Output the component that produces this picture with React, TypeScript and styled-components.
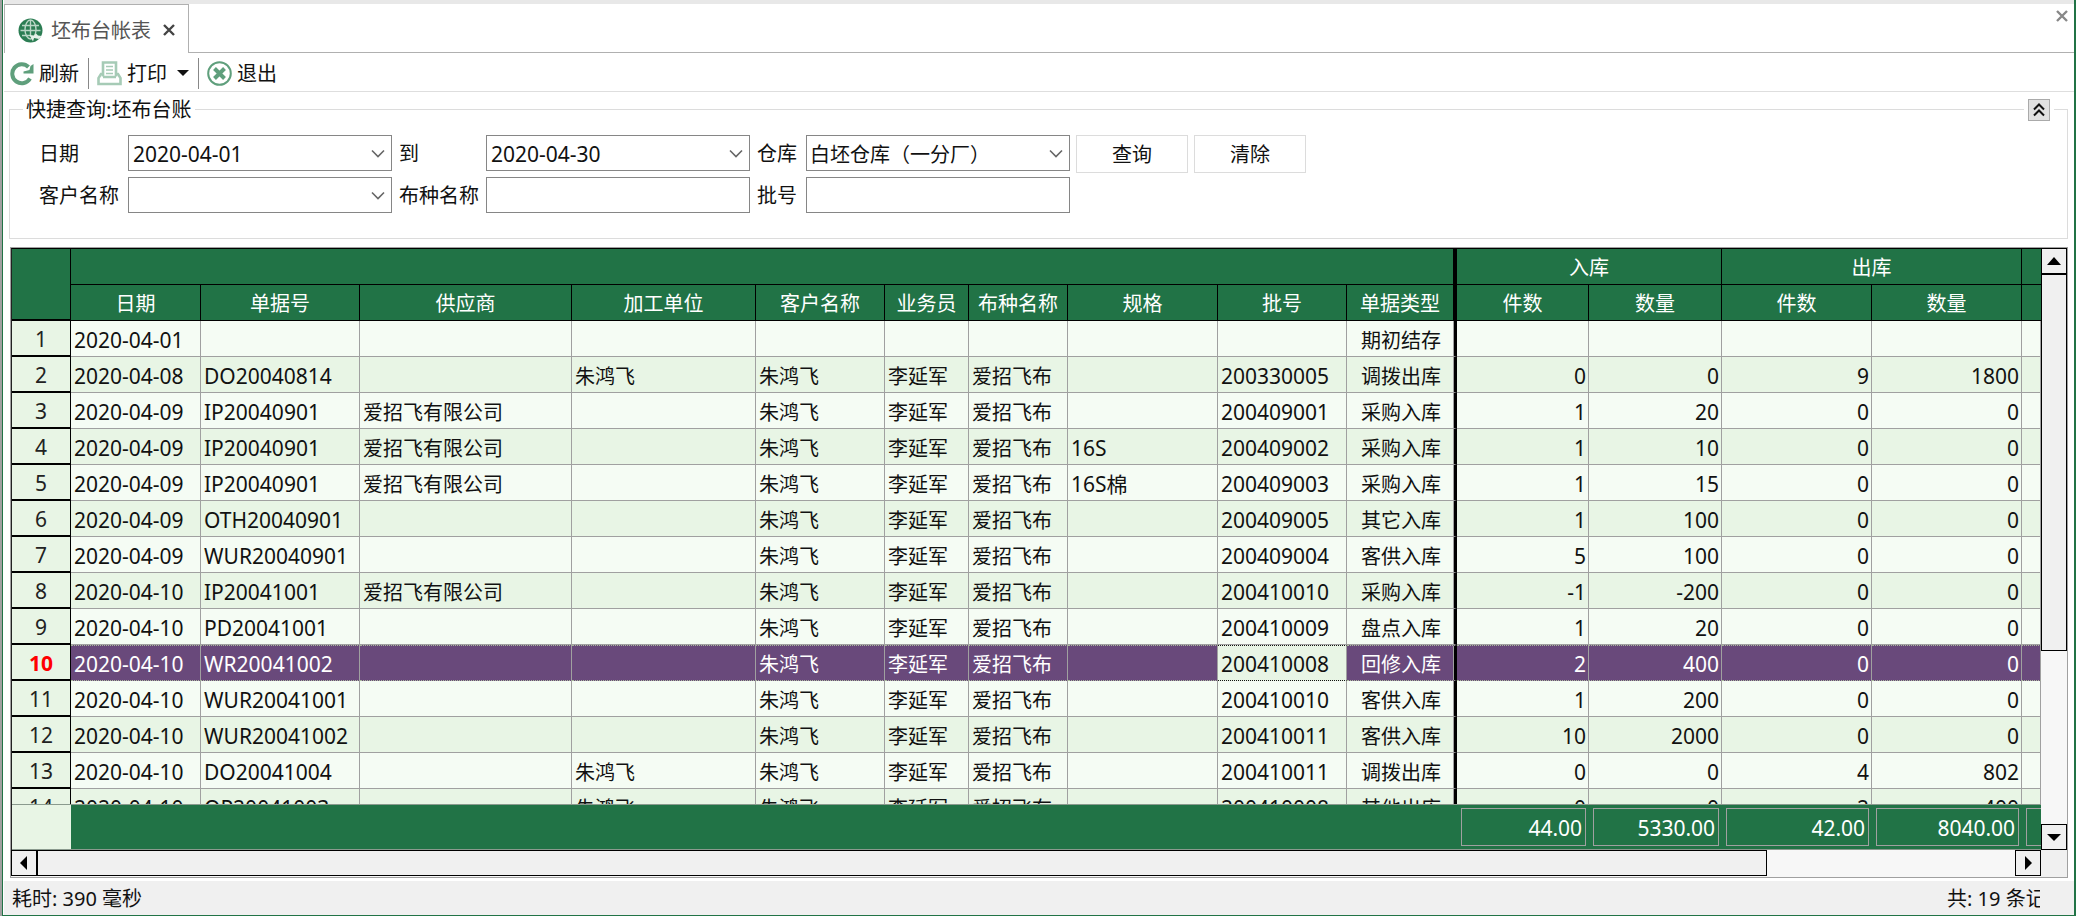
import React from "react";
import styled, { createGlobalStyle, css } from "styled-components";

const green = "#217346";
const latin = `"Noto Sans", "Noto Sans CJK SC", sans-serif`;
const cjk = `"Noto Sans CJK SC", "Noto Sans", sans-serif`;

const GlobalStyle = createGlobalStyle`
  *, *::before, *::after { box-sizing: border-box; }
  body { margin: 0; background: #fff; color: #111; font: 20px/24px ${cjk}; }
  button, input, select { font: inherit; color: inherit; }
`;

const Frame = styled.div`
  height: 100vh;
  padding-left: 2px;
  background: #a0a0a0;
`;

const Window = styled.div`
  display: flex;
  flex-direction: column;
  height: 100vh;
  overflow: hidden;
  padding-left: 1px;
  border: solid ${green};
  border-width: 0 2px 1px 1px;
  background: #fff;
`;

const TabStrip = styled.header`
  display: flex;
  flex: none;
  height: 53px;
  border-top: 4px solid #e8e8e8;
`;

const Tab = styled.div`
  display: flex;
  align-items: center;
  gap: 8px;
  width: 185px;
  padding: 2px 8px 0 13px;
  border: 1px solid #b0b0b0;
  border-bottom: 0;
  color: #555;
  white-space: nowrap;
  svg { flex: none; }
`;

const TabRest = styled.div`
  display: flex;
  flex: 1;
  justify-content: flex-end;
  align-items: flex-start;
  padding: 5px 5px 0 0;
  border-bottom: 1px solid #b0b0b0;
`;

const IconButton = styled.button<{ $color: string }>`
  display: grid;
  place-items: center;
  width: 14px;
  height: 14px;
  margin-left: 3px;
  padding: 0;
  border: 0;
  background: none;
  color: ${(p) => p.$color};
`;

const Toolbar = styled.div`
  display: flex;
  flex: none;
  align-items: center;
  height: 39px;
  padding: 2px 0 0 5px;
  border-bottom: 1px solid #dedede;
`;

const ToolButton = styled.button`
  display: flex;
  align-items: center;
  gap: 5px;
  height: 30px;
  padding: 0;
  border: 0;
  background: none;
`;

const Separator = styled.span`
  width: 1px;
  height: 31px;
  margin: 0 8px 0 9px;
  background: #888;
`;

const Caret = styled.span`
  margin-left: 5px;
  border: 6px solid transparent;
  border-top-color: #111;
  border-bottom: 0;
`;

const Query = styled.fieldset`
  position: relative;
  flex: none;
  height: 143px;
  margin: 4px 6px 0 5px;
  padding: 13px 28px 0;
  border: 1px solid #dcdcdc;
`;

const Legend = styled.legend`
  margin-left: -15px;
  padding: 0 3px;
  height: 26px;
  line-height: 26px;
`;

const Collapse = styled.button`
  position: absolute;
  top: -23px;
  right: 17px;
  display: grid;
  place-items: center;
  width: 22px;
  height: 22px;
  padding: 0;
  border: 1px solid #aaa;
  background: #e1e1e1;
  box-shadow: -4px 0 #fff, 4px 0 #fff;
`;

const Fields = styled.div`
  display: grid;
  grid-template-columns: 84px 264px 82px 264px 44px 264px 112px 112px;
  grid-auto-rows: 36px;
  gap: 6px;
  label { padding-left: 1px; white-space: nowrap; line-height: 36px; }
`;

const Box = styled.span`
  display: flex;
  align-items: center;
  border: 1px solid #868686;
  background: #fff;
`;

const Input = styled.input`
  flex: 1;
  min-width: 0;
  height: 34px;
  padding: 2px 4px 0;
  border: 0;
  outline: 0;
  background: none;
  font: 21px ${latin};
`;

const DropButton = styled.button`
  display: grid;
  place-items: center;
  width: 26px;
  height: 34px;
  padding: 0;
  border: 0;
  background: none;
  color: #666;
`;

const SelectBox = styled(Box)`
  display: grid;
  grid-template-columns: 1fr 26px;
  svg { grid-area: 1 / 2; justify-self: center; pointer-events: none; color: #666; }
`;

const Select = styled.select`
  grid-area: 1 / 1 / 2 / 3;
  height: 34px;
  padding: 2px 3px 0;
  border: 0;
  outline: 0;
  appearance: none;
  background: none;
`;

const PushButton = styled.button`
  height: 38px;
  border: 1px solid #dcdcdc;
  background: #fff;
`;

const GridFrame = styled.main`
  display: grid;
  grid-template-columns: 1fr 26px;
  grid-template-rows: 1fr 27px;
  flex: 1;
  min-height: 0;
  margin: 8px 6px 3px;
  border: 1px solid #a0a0a0;
`;

const Viewport = styled.div`
  display: flex;
  flex-direction: column;
  min-width: 0;
  min-height: 0;
  border-top: 1px solid #000;
  border-left: 1px solid #222;
`;

const Clip = styled.div`
  flex: 1;
  min-height: 0;
  overflow: hidden;
`;

const Table = styled.table`
  width: 100%;
  table-layout: fixed;
  border-collapse: separate;
  border-spacing: 0;
`;

const HeadCell = styled.th<{ $frozen?: boolean }>`
  height: 36px;
  padding: 0;
  border: solid #000;
  border-width: 0 ${(p) => (p.$frozen ? 4 : 1)}px 1px 0;
  background: ${green};
  color: #fff;
  font-weight: 400;
  line-height: 24px;
  white-space: nowrap;
  &:last-child { border-right: 0; }
`;

const Corner = styled(HeadCell)`
  border-bottom-width: 2px;
`;

const RowHead = styled.th<{ $active: boolean }>`
  height: 36px;
  padding: 2px 0 0;
  border: solid #000;
  border-width: 0 1px 2px 0;
  background: #e8f5e5;
  font: ${(p) => (p.$active ? 700 : 400)} 21px/24px ${latin};
  color: ${(p) => (p.$active ? "#f00" : "#222")};
`;

const Cell = styled.td<{ $align?: string; $latin?: boolean; $frozen?: boolean; $focus?: boolean }>`
  height: 36px;
  padding: 2px 2px 0 3px;
  border: solid #a0a0a0;
  border-width: 0 1px 1px 0;
  text-align: ${(p) => p.$align || "left"};
  white-space: nowrap;
  ${(p) => p.$latin && css`font: 21px/24px ${latin};`}
  ${(p) => p.$frozen && css`
    border-right: 3px solid #000;
    box-shadow: inset -1px 0 #a0a0a0;
  `}
  ${(p) => p.$focus && css`
    background: #e8f5e5;
    color: #111;
  `}
`;

const Row = styled.tr<{ $active: boolean }>`
  background: #f5fcf4;
  &:nth-child(even) { background: #e8f5e5; }
  ${(p) => p.$active && css`
    &&& { background: #69497b; }
    color: #fff;
    td { border-top: 1px dotted #a9b89c; border-bottom: 1px dotted #a9b89c; }
    ${Cell}:nth-child(10) { border-top-color: #111; border-bottom-color: #111; }
  `}
`;

const Totals = styled.div`
  flex: none;
  border-top: 1px solid #8a9a8e;
  border-bottom: 1px solid #8a9a8e;
  background: ${green};
`;

const TotalCell = styled.td<{ $stub?: boolean }>`
  height: 44px;
  padding: 3px 3px 3px 4px;
  background: ${(p) => (p.$stub ? "#e8f5e5" : green)};
`;

const TotalBox = styled.div<{ $open?: boolean }>`
  height: 38px;
  padding: 0 3px;
  border: 1px solid #a0a0a0;
  ${(p) => p.$open && css`border-right: 0; margin-right: -3px;`}
  color: #fff;
  font: 21px/38px ${latin};
  text-align: right;
`;

const Track = styled.div<{ $vertical?: boolean }>`
  display: flex;
  flex-direction: ${(p) => (p.$vertical ? "column" : "row")};
  min-width: 0;
  min-height: 0;
  background: #f7f7f7;
`;

const Arrow = styled.button`
  display: grid;
  flex: none;
  place-items: center;
  width: 26px;
  height: 26px;
  padding: 0;
  border: 1px solid #000;
  background: #f0f0f0;
`;

const Thumb = styled.div<{ $grow: number }>`
  flex: ${(p) => p.$grow} 1 0;
  height: 26px;
  border: 1px solid #000;
  background: #f0f0f0;
`;

const Gap = styled.div<{ $grow: number }>`
  flex: ${(p) => p.$grow} 1 0;
`;

const GridCorner = styled.div`
  background: #f0f0f0;
`;

const StatusBar = styled.footer`
  display: flex;
  flex: none;
  justify-content: space-between;
  height: 34px;
  padding: 0 34px 0 8px;
  background: #f0f0f0;
  font-family: ${latin};
  line-height: 36px;
  span { overflow: hidden; white-space: nowrap; }
  span + span { width: 93px; }
`;

const Cross = () => (
  <svg width="14" height="14" viewBox="0 0 14 14" fill="none" stroke="currentColor" strokeWidth="2.4">
    <path d="M2 2l10 10M12 2L2 12" />
  </svg>
);

const Chevron = () => (
  <svg width="14" height="9" viewBox="0 0 14 9" fill="none" stroke="currentColor" strokeWidth="1.6">
    <path d="M1 1.5l6 6 6-6" />
  </svg>
);

const Globe = () => (
  <svg width="25" height="25" viewBox="0 0 25 25">
    <circle cx="12.5" cy="12.5" r="12" fill="#2b7d53" />
    <g fill="none" stroke="#b9d6c5" strokeWidth="1.4">
      <ellipse cx="12.5" cy="11.5" rx="5.5" ry="9.5" />
      <path d="M12.5 2v16M4 7.500h17M2.500 12.500h20M4 17.500h9" />
    </g>
    <path d="M11.500 17l3.500 6.500 1-3.500 5 1 2.500-3-3.500-.5-2-2-2 2z" fill="#e6f1ea" />
  </svg>
);

const Refresh = () => (
  <svg width="25" height="25" viewBox="0 0 25 25">
    <path d="M21 17.500A9.500 9.500 0 1 1 19.500 6" fill="none" stroke="#5f9f7c" strokeWidth="4" />
    <path d="M24.500 3v9.500H14.500v-2l6-1.500 1-4z" fill="#5f9f7c" />
  </svg>
);

const Printer = () => (
  <svg width="25" height="25" viewBox="0 0 25 25" fill="none" stroke="#a6cbb6">
    <path d="M6 15.500V1.500h13v14" strokeWidth="2.6" />
    <path d="M9 5.500h7M9 9h7M9 12.500h7" strokeWidth="1.6" />
    <path d="M5.500 13H4L1.500 17v6h22v-6L21 13h-1.500M6 16h13" strokeWidth="2.6" />
  </svg>
);

const Exit = () => (
  <svg width="25" height="25" viewBox="0 0 25 25" fill="none" stroke="#5f9f7c">
    <circle cx="12.5" cy="12.5" r="11.3" strokeWidth="2" />
    <path d="M7.500 7.500l10 10M17.500 7.500l-10 10" strokeWidth="4" />
  </svg>
);

const Triangle = ({ d }: { d: string }) => (
  <svg width="14" height="14" viewBox="0 0 14 14"><path d={d} /></svg>
);

type Column = { title: string; width?: number; align?: string; latin?: boolean };
const columns: Column[] = [
  { title: "日期", width: 130, latin: true },
  { title: "单据号", width: 159, latin: true },
  { title: "供应商", width: 212 },
  { title: "加工单位", width: 184 },
  { title: "客户名称", width: 129 },
  { title: "业务员", width: 84 },
  { title: "布种名称", width: 99 },
  { title: "规格", width: 150, latin: true },
  { title: "批号", width: 129, latin: true },
  { title: "单据类型", width: 110, align: "center" },
  { title: "件数", width: 132, align: "right", latin: true },
  { title: "数量", width: 133, align: "right", latin: true },
  { title: "件数", width: 150, align: "right", latin: true },
  { title: "数量", width: 150, align: "right", latin: true },
  { title: "" },
];
const FROZEN = 9;
const ACTIVE_ROW = 9;
const ACTIVE_COL = 8;

const co = "爱招飞有限公司";
const people = ["朱鸿飞", "李延军", "爱招飞布"];
const rows: string[][] = [
  ["2020-04-01", "", "", "", "", "", "", "", "", "期初结存", "", "", "", ""],
  ["2020-04-08", "DO20040814", "", "朱鸿飞", ...people, "", "200330005", "调拨出库", "0", "0", "9", "1800"],
  ["2020-04-09", "IP20040901", co, "", ...people, "", "200409001", "采购入库", "1", "20", "0", "0"],
  ["2020-04-09", "IP20040901", co, "", ...people, "16S", "200409002", "采购入库", "1", "10", "0", "0"],
  ["2020-04-09", "IP20040901", co, "", ...people, "16S棉", "200409003", "采购入库", "1", "15", "0", "0"],
  ["2020-04-09", "OTH20040901", "", "", ...people, "", "200409005", "其它入库", "1", "100", "0", "0"],
  ["2020-04-09", "WUR20040901", "", "", ...people, "", "200409004", "客供入库", "5", "100", "0", "0"],
  ["2020-04-10", "IP20041001", co, "", ...people, "", "200410010", "采购入库", "-1", "-200", "0", "0"],
  ["2020-04-10", "PD20041001", "", "", ...people, "", "200410009", "盘点入库", "1", "20", "0", "0"],
  ["2020-04-10", "WR20041002", "", "", ...people, "", "200410008", "回修入库", "2", "400", "0", "0"],
  ["2020-04-10", "WUR20041001", "", "", ...people, "", "200410010", "客供入库", "1", "200", "0", "0"],
  ["2020-04-10", "WUR20041002", "", "", ...people, "", "200410011", "客供入库", "10", "2000", "0", "0"],
  ["2020-04-10", "DO20041004", "", "朱鸿飞", ...people, "", "200410011", "调拨出库", "0", "0", "4", "802"],
  ["2020-04-10", "OP20041003", "", "朱鸿飞", ...people, "", "200410008", "其他出库", "0", "0", "2", "400"],
];

const Cols = () => (
  <colgroup>
    <col width={59} />
    {columns.map((c, i) => <col key={i} width={c.width} />)}
  </colgroup>
);

function DropBox({ id, value }: { id: string; value: string }) {
  return (
    <Box>
      <Input id={id} defaultValue={value} />
      <DropButton type="button" aria-label="展开"><Chevron /></DropButton>
    </Box>
  );
}

export default function App() {
  return (
    <Frame>
      <GlobalStyle />
      <Window>
        <TabStrip>
          <Tab>
            <Globe />
            <span>坯布台帐表</span>
            <IconButton $color="#444" aria-label="关闭标签"><Cross /></IconButton>
          </Tab>
          <TabRest>
            <IconButton $color="#888" aria-label="关闭"><Cross /></IconButton>
          </TabRest>
        </TabStrip>

        <Toolbar>
          <ToolButton><Refresh />刷新</ToolButton>
          <Separator />
          <ToolButton><Printer />打印<Caret /></ToolButton>
          <Separator />
          <ToolButton><Exit />退出</ToolButton>
        </Toolbar>

        <Query>
          <Legend>快捷查询:坯布台账</Legend>
          <Collapse type="button" aria-label="收起">
            <svg width="12" height="14" viewBox="0 0 12 14" fill="none" stroke="#111" strokeWidth="2">
              <path d="M1 6.500l5-5 5 5M1 12.500l5-5 5 5" />
            </svg>
          </Collapse>
          <Fields>
            <label htmlFor="from">日期</label>
            <DropBox id="from" value="2020-04-01" />
            <label htmlFor="to">到</label>
            <DropBox id="to" value="2020-04-30" />
            <label htmlFor="store">仓库</label>
            <SelectBox>
              <Select id="store"><option>白坯仓库（一分厂）</option></Select>
              <Chevron />
            </SelectBox>
            <PushButton type="button">查询</PushButton>
            <PushButton type="button">清除</PushButton>
            <label htmlFor="customer">客户名称</label>
            <DropBox id="customer" value="" />
            <label htmlFor="cloth">布种名称</label>
            <Box><Input id="cloth" /></Box>
            <label htmlFor="batch">批号</label>
            <Box><Input id="batch" /></Box>
          </Fields>
        </Query>

        <GridFrame>
          <Viewport>
            <Clip>
              <Table>
                <Cols />
                <thead>
                  <tr>
                    <Corner rowSpan={2} />
                    <HeadCell colSpan={10} $frozen />
                    <HeadCell colSpan={2}>入库</HeadCell>
                    <HeadCell colSpan={2}>出库</HeadCell>
                    <HeadCell />
                  </tr>
                  <tr>
                    {columns.map((c, i) => <HeadCell key={i} $frozen={i === FROZEN}>{c.title}</HeadCell>)}
                  </tr>
                </thead>
                <tbody>
                  {rows.map((r, n) => (
                    <Row key={n} $active={n === ACTIVE_ROW}>
                      <RowHead $active={n === ACTIVE_ROW}>{n + 1}</RowHead>
                      {columns.map((c, i) => (
                        <Cell
                          key={i}
                          $align={c.align}
                          $latin={c.latin}
                          $frozen={i === FROZEN}
                          $focus={n === ACTIVE_ROW && i === ACTIVE_COL}
                        >
                          {r[i]}
                        </Cell>
                      ))}
                    </Row>
                  ))}
                </tbody>
              </Table>
            </Clip>
            <Totals>
              <Table>
                <Cols />
                <tbody>
                  <tr>
                    <TotalCell $stub />
                    <TotalCell colSpan={10} />
                    <TotalCell><TotalBox>44.00</TotalBox></TotalCell>
                    <TotalCell><TotalBox>5330.00</TotalBox></TotalCell>
                    <TotalCell><TotalBox>42.00</TotalBox></TotalCell>
                    <TotalCell><TotalBox>8040.00</TotalBox></TotalCell>
                    <TotalCell><TotalBox $open /></TotalCell>
                  </tr>
                </tbody>
              </Table>
            </Totals>
          </Viewport>
          <Track $vertical>
            <Arrow aria-label="向上"><Triangle d="M0 11l7-8 7 8z" /></Arrow>
            <Thumb $grow={376} />
            <Gap $grow={174} />
            <Arrow aria-label="向下"><Triangle d="M0 4l7 7 7-7z" /></Arrow>
          </Track>
          <Track>
            <Arrow aria-label="向左"><Triangle d="M10 0l-7 7 7 7z" /></Arrow>
            <Thumb $grow={1730} />
            <Gap $grow={248} />
            <Arrow aria-label="向右"><Triangle d="M4 0l7 7-7 7z" /></Arrow>
          </Track>
          <GridCorner />
        </GridFrame>

        <StatusBar>
          <span>耗时: 390 毫秒</span>
          <span>共: 19 条记录</span>
        </StatusBar>
      </Window>
    </Frame>
  );
}
